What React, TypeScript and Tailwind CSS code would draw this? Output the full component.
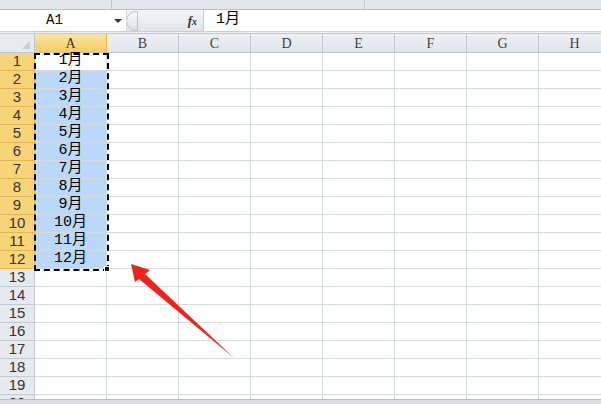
const cols = ["A", "B", "C", "D", "E", "F", "G", "H"];
const rows = Array.from({ length: 20 }, (_, i) => i + 1);

const cellFont = { fontFamily: '"Liberation Mono", "Noto Sans CJK SC", monospace' };

const App = () => {
  return (
    <div className="relative w-[601px] h-[404px] overflow-hidden bg-white select-none">
      {/* ribbon remnant */}
      <div className="h-[10px] bg-[#e3e7ec] border-b border-[#b9c0c9] flex">
        <div className="w-[112px] border-r border-[#c5cbd2]" />
        <div className="w-[253px] border-r border-[#c5cbd2]" />
        <div className="flex-1" />
      </div>

      {/* formula bar */}
      <div className="h-[22px] flex bg-white border-b border-[#c7cdd4]">
        <div className="w-[127px] flex items-center relative border-r border-[#d5dae0]">
          <span className="absolute left-[46px] text-[14px] text-black" style={cellFont}>
            A1
          </span>
          <span className="absolute left-[114px] top-[9px] w-0 h-0 border-l-[4px] border-r-[4px] border-t-[4px] border-l-transparent border-r-transparent border-t-[#333]" />
        </div>
        <div className="w-[77px] flex items-center bg-gradient-to-b from-[#f4f6f8] to-[#e1e5ea] border-r border-[#c3c9d0]">
          <div className="w-[12px] h-[20px] -ml-[1px] rounded-l-full border border-[#b9c0c8] bg-gradient-to-b from-[#fbfcfd] to-[#d9dee4]" />
          <div className="flex-1" />
          <span className="mr-[6px] text-[13px] italic font-bold text-[#333]" style={{ fontFamily: '"Liberation Serif", serif' }}>
            f<span className="text-[10px]">x</span>
          </span>
        </div>
        <div className="flex-1 flex items-center pl-[12px] text-[15px] text-black" style={cellFont}>
          1月
        </div>
      </div>
      <div className="h-[2px] bg-[#eef0f3] border-b border-[#c3c9d0]" />

      {/* column header */}
      <div className="flex h-[19px] border-b border-[#c0c6ce]">
        <div className="w-[35px] shrink-0 bg-[#e7eaee] border-r border-[#c0c6ce] relative">
          <span className="absolute right-[4px] bottom-[3px] w-0 h-0 [border-bottom:8px_solid_#c9ced5] [border-left:8px_solid_transparent]" />
        </div>
        {cols.map((c) => (
          <div
            key={c}
            className={`w-[72px] shrink-0 flex items-center justify-center text-[14px] border-r ${
              c === "A"
                ? "bg-gradient-to-b from-[#fbe4a0] to-[#f5cc62] border-[#e0b84e] text-[#333]"
                : "bg-gradient-to-b from-[#eef0f3] to-[#e1e5ea] border-[#c0c6ce] text-[#444]"
            }`}
            style={{ fontFamily: '"Liberation Serif", serif' }}
          >
            {c}
          </div>
        ))}
      </div>

      {/* grid */}
      {rows.map((r) => (
        <div key={r} className="flex h-[18px]">
          <div
            className={`w-[35px] shrink-0 flex items-center justify-center text-[15px] border-r border-b ${
              r <= 12
                ? "bg-[#f8d478] border-[#e2b656] text-[#333]"
                : "bg-[#e6e9ed] border-[#c3c9d0] text-[#333]"
            }`}
            style={{ fontFamily: '"Liberation Sans", sans-serif' }}
          >
            {r}
          </div>
          {cols.map((c) => (
            <div
              key={c}
              className={`w-[72px] shrink-0 flex items-center justify-center text-[15px] text-black border-r border-b border-[#d6d9dd] ${
                c === "A" && r >= 2 && r <= 12 ? "bg-[#bad9fa]" : "bg-white"
              }`}
              style={cellFont}
            >
              {c === "A" && r <= 12 ? `${r}月` : ""}
            </div>
          ))}
        </div>
      ))}

      {/* horizontal scrollbar remnant */}
      <div className="absolute left-0 right-0 top-[399px] h-[5px] bg-[#d9dde2] border-t border-[#b8bec6]" />

      {/* marching ants selection */}
      <div className="absolute left-[34px] top-[53px] w-[75px] h-[218px] border-2 border-dashed border-black pointer-events-none" />
      <div className="absolute left-[104px] top-[266px] w-[6px] h-[6px] bg-black border border-white" />

      {/* red arrow */}
      <svg className="absolute left-0 top-0" width="601" height="404" viewBox="0 0 601 404">
        <polygon
          points="131,264 150,270 145,274 234,358 139,279 135,282"
          fill="#f0231c"
        />
      </svg>
    </div>
  );
};

export default App;
